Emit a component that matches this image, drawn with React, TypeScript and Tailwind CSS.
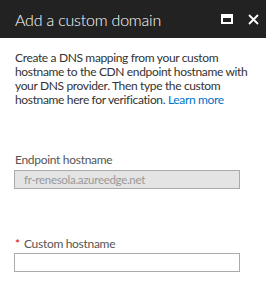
import React from "react";

export default function App() {
  return (
    <div className="w-[266px] h-[303px] bg-white overflow-hidden" style={{ fontFamily: 'Lato, "Noto Sans", sans-serif' }}>
      <div className="h-[38px] bg-[#222222] flex items-center pl-[15px] pr-[7px]">
        <div className="text-[16px] text-white font-light flex-1 leading-none pt-[1px] tracking-[-0.2px]">Add a custom domain</div>
        <div className="flex items-center gap-[15px]">
          <svg width="12" height="10" viewBox="0 0 12 10">
            <rect x="1" y="1" width="10" height="8" fill="none" stroke="#fff" strokeWidth="2" />
            <rect x="1" y="1" width="10" height="3" fill="#fff" />
          </svg>
          <svg width="11" height="11" viewBox="0 0 11 11">
            <path d="M1 1 L10 10 M10 1 L1 10" stroke="#fff" strokeWidth="1.8" />
          </svg>
        </div>
      </div>
      <div className="px-[15px] pt-[13px]">
        <p className="text-[12px] leading-[14px] text-[#333] whitespace-nowrap tracking-[-0.35px]">
          Create a DNS mapping from your custom
          <br />
          hostname to the CDN endpoint hostname with
          <br />
          your DNS provider. Then type the custom
          <br />
          hostname here for verification. <span className="text-[#0072c6]">Learn more</span>
        </p>
        <div className="mt-[46px] text-[12px] text-[#555] leading-[14px] tracking-[-0.3px]">Endpoint hostname</div>
        <div className="mt-[3px] w-[226px] h-[19px] -ml-[1px] border border-[#aaa] bg-[#e4e4e4] text-[11.5px] text-[#999] flex items-center pl-[9px] tracking-[-0.3px]">
          fr-renesola.azureedge.net
        </div>
        <div className="mt-[48px] text-[12px] text-[#555] leading-[14px] flex items-center tracking-[-0.3px]">
          <span className="text-[#d80000] w-[9px]">*</span>Custom hostname
        </div>
        <div className="mt-[2px] w-[226px] h-[19px] -ml-[1px] border border-[#aaa] bg-white" />
      </div>
    </div>
  );
}
